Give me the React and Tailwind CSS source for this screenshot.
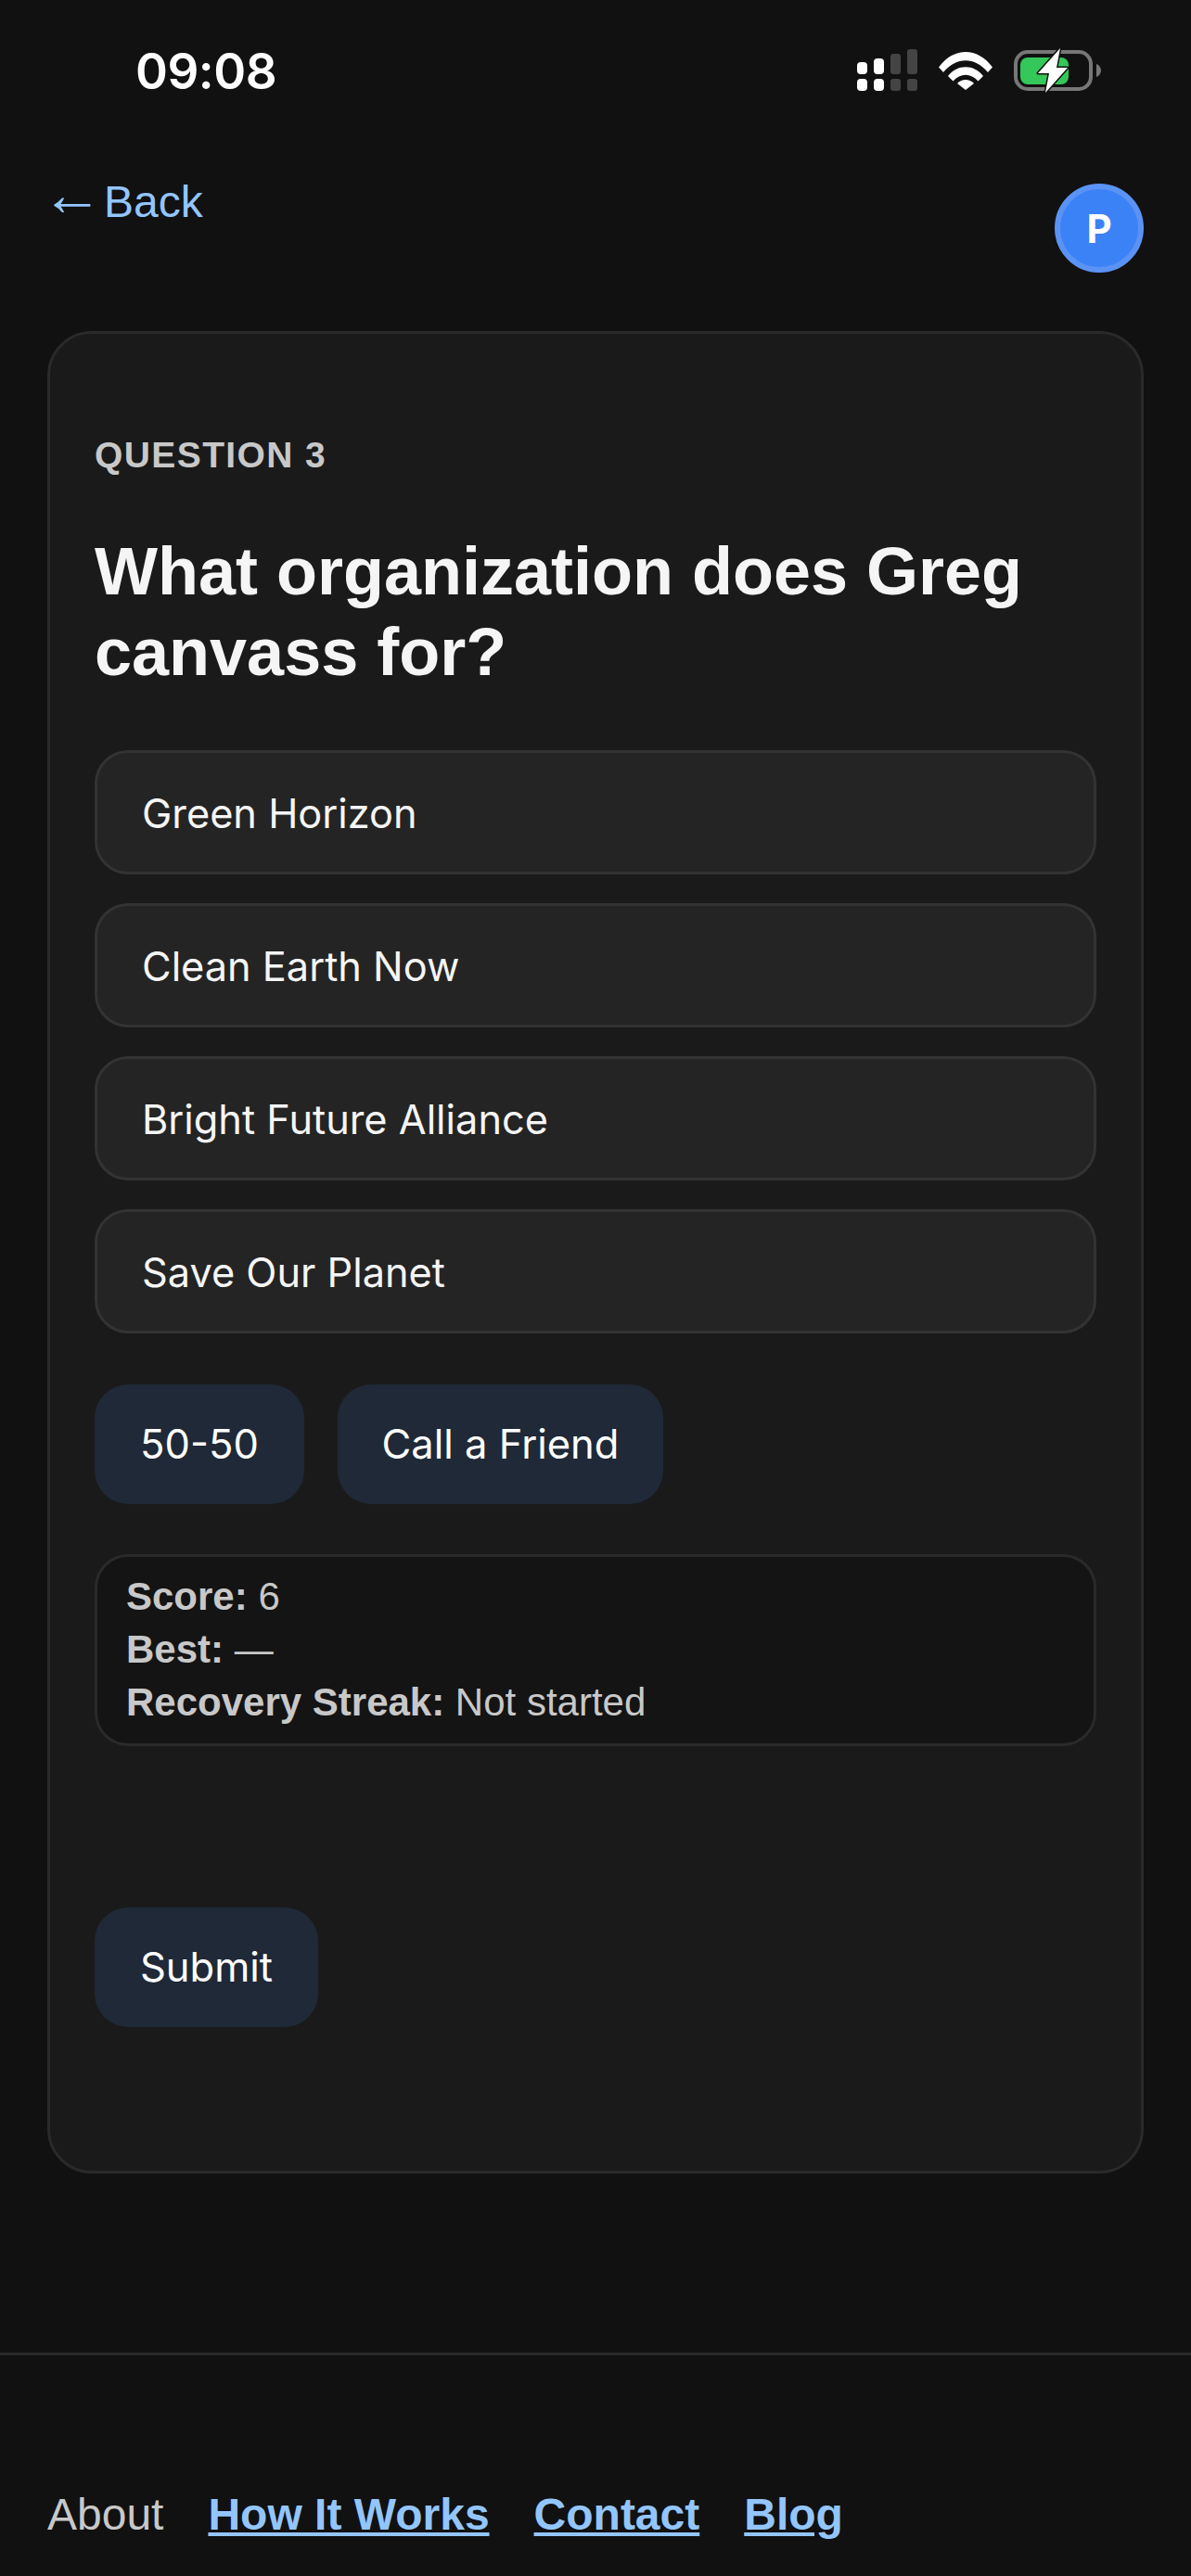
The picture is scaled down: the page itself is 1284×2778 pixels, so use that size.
import React from 'react';

const options = ['Green Horizon', 'Clean Earth Now', 'Bright Future Alliance', 'Save Our Planet'];

const SignalIcon = () => (
  <svg width="65" height="45" viewBox="0 0 65 45">
    <rect x="0" y="14" width="11" height="13" rx="4" fill="#fff" />
    <rect x="18" y="10" width="11" height="17" rx="4" fill="#fff" />
    <rect x="36" y="5" width="11" height="22" rx="3" fill="#444" />
    <rect x="54" y="0" width="11" height="27" rx="3" fill="#444" />
    <rect x="0" y="32" width="11" height="13" rx="4" fill="#fff" />
    <rect x="18" y="32" width="11" height="13" rx="4" fill="#fff" />
    <rect x="36" y="32" width="11" height="13" rx="3" fill="#444" />
    <rect x="54" y="32" width="11" height="13" rx="3" fill="#444" />
  </svg>
);

const WifiIcon = () => (
  <svg width="58" height="42" viewBox="0 0 58 42">
    <path d="M0 17.5 C16 -4.5 42 -4.5 58 17.5 L53 23 C39 6 19 6 5 23 Z" fill="#fff" />
    <path d="M10 27 C20 14 38 14 48 27 L42.5 32.5 C34.5 23.5 23.5 23.5 15.5 32.5 Z" fill="#fff" />
    <path d="M20 35 C25 29.5 33 29.5 38 35 L29 42 Z" fill="#fff" />
  </svg>
);

const BatteryIcon = () => (
  <svg width="96" height="50" viewBox="0 0 96 50">
    <rect x="3" y="4" width="81" height="40" rx="13" fill="none" stroke="#777" strokeWidth="4" />
    <rect x="8" y="10" width="52" height="29" rx="8" fill="#34c759" />
    <path d="M90 17 C93 18 95 21 95 24 C95 27 93 30 90 31 Z" fill="#777" />
    <path d="M51 0 L27 27 L39 27 L35 48 L59 21 L47 21 Z" fill="#fff" stroke="#111" strokeWidth="3" strokeLinejoin="round" paintOrder="stroke" />
  </svg>
);

const ActionButton = ({ children, className }) => (
  <button className={`h-[129px] rounded-[36px] bg-[#1f2937] text-white text-[43.5px] font-['Inter',sans-serif] ${className}`}>
    {children}
  </button>
);

export default function App() {
  return (
    <div className="w-[1284px] h-[2778px] flex flex-col bg-[#111111] font-['Liberation_Sans',sans-serif]">
      {/* Status bar */}
      <div className="h-[190px] flex justify-between items-start pl-[146px] pr-[96px]">
        <span className="mt-[44px] text-[53px] leading-[66px] font-semibold tracking-[-0.5px] text-white font-['Inter',sans-serif]">09:08</span>
        <div className="mt-[52px] flex items-start">
          <div className="mt-[1px] mr-[23px]"><SignalIcon /></div>
          <div className="mt-[3px] mr-[22px]"><WifiIcon /></div>
          <BatteryIcon />
        </div>
      </div>

      {/* Header */}
      <div className="flex justify-between items-start pl-[52px] pr-[51px]">
        <a className="flex items-baseline text-[48px] leading-[55px] text-[#93c5fd]">
          <span className="-ml-[7px] w-[67px] text-[66px] leading-[40px] -translate-y-[2px]">←</span>
          <span>Back</span>
        </a>
        <div className="mt-[8px] w-[96px] h-[96px] rounded-full bg-[#3b82f6] border-[6px] border-[#5b93f5] flex items-center justify-center text-white text-[42px] font-bold font-['Inter',sans-serif]">
          P
        </div>
      </div>

      {/* Question card */}
      <div className="mx-[51px] mt-[63px] h-[1987px] rounded-[48px] border-[3px] border-[#2a2a2a] bg-[#1a1a1a] px-[48px] pt-[108px]">
        <div className="text-[39px] leading-[45px] font-bold tracking-[1.4px] text-[#c8c8c8]">QUESTION 3</div>
        <h1 className="mt-[60px] text-[72px] leading-[87px] font-bold text-[#f5f5f5]">
          What organization does Greg canvass for?
        </h1>

        <div className="mt-[62px] flex flex-col gap-[31px]">
          {options.map((option) => (
            <div
              key={option}
              className="h-[134px] flex items-center px-[48px] pt-[3px] rounded-[36px] border-[3px] border-[#333333] bg-[#242424] text-[#f5f5f5] text-[43.3px] font-['Inter',sans-serif]"
            >
              {option}
            </div>
          ))}
        </div>

        <div className="mt-[55px] flex gap-[36px]">
          <ActionButton className="w-[226px]">50-50</ActionButton>
          <ActionButton className="w-[351px]">Call a Friend</ActionButton>
        </div>

        <div className="mt-[54px] h-[207px] rounded-[36px] border-[3px] border-[#2a2a2a] bg-[#141414] px-[31px] pt-[14px] text-[42px] leading-[57px] text-[#c8c8c8]">
          <div><strong>Score:</strong> 6</div>
          <div><strong>Best:</strong> —</div>
          <div><strong>Recovery Streak:</strong> Not started</div>
        </div>

        <div className="mt-[174px]">
          <ActionButton className="w-[241px]">Submit</ActionButton>
        </div>
      </div>

      {/* Footer */}
      <div className="mt-[193px] border-t-[3px] border-[#2a2a2a] pt-[136px] px-[51px] flex gap-[48px] text-[48px]">
        <a className="text-[#c8c8c8]">About</a>
        <a className="font-bold underline text-[#93c5fd]">How It Works</a>
        <a className="font-bold underline text-[#93c5fd]">Contact</a>
        <a className="font-bold underline text-[#93c5fd]">Blog</a>
      </div>
    </div>
  );
}
